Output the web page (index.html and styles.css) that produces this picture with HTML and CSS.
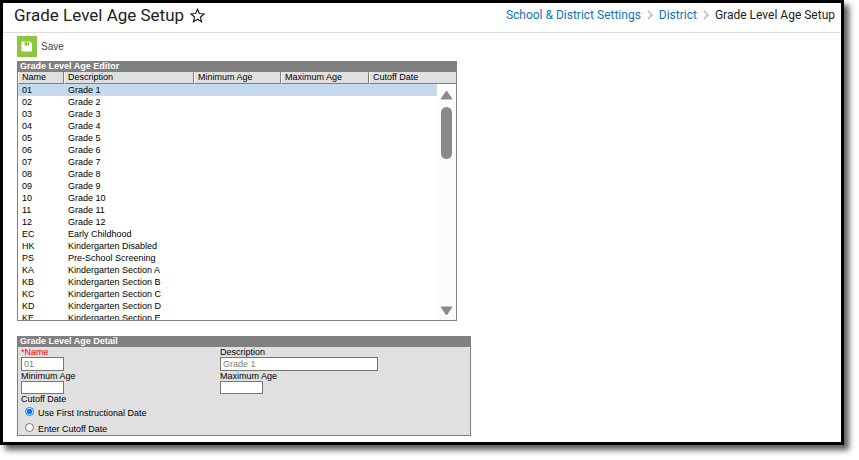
FILE: index.html
```html
<!DOCTYPE html>
<html lang="en">
<head>
<meta charset="utf-8">
<title>Grade Level Age Setup</title>
<link rel="stylesheet" href="styles.css">
</head>
<body>
<div class="frame">
  <header class="top">
    <h1>Grade Level Age Setup</h1>
    <button class="star" type="button" aria-label="Favorite">
      <svg width="15" height="15" viewBox="0 0 15 15"><path d="M7.500 1.300 9.300 5.500 14 6 10.500 9 11.500 13.700 7.500 11.200 3.500 13.700 4.500 9 1 6 5.700 5.500Z" fill="none" stroke="#222" stroke-width="1.200"/></svg>
    </button>
    <nav class="crumbs" aria-label="Breadcrumb">
      <a href="#">School &amp; District Settings</a>
      <svg width="6" height="10" viewBox="0 0 6 10"><path d="M1 1 5 5 1 9" fill="none" stroke="#b5b5b5" stroke-width="1.400"/></svg>
      <a href="#">District</a>
      <svg width="6" height="10" viewBox="0 0 6 10"><path d="M1 1 5 5 1 9" fill="none" stroke="#b5b5b5" stroke-width="1.400"/></svg>
      <span>Grade Level Age Setup</span>
    </nav>
  </header>
  <main>
    <button class="save" type="button">
      <svg width="20" height="21" viewBox="0 0 20 21"><rect width="20" height="21" fill="#8dc63f"/><path d="M5.500 5.500H13L15 7.500V14.500Q15 15.500 14 15.500H5.500Q4.500 15.500 4.500 14.500V6.500Q4.500 5.500 5.500 5.500Z" fill="#fff"/><path d="M7.500 6V9.500H12V6H11V8H10V6Z" fill="#8dc63f"/></svg>
      <span>Save</span>
    </button>

    <section class="panel editor">
      <h2>Grade Level Age Editor</h2>
      <div class="list">
        <table>
          <colgroup><col class="c-name"><col class="c-desc"><col class="c-age"><col class="c-max"><col></colgroup>
          <thead><tr><th>Name</th><th>Description</th><th>Minimum Age</th><th>Maximum Age</th><th>Cutoff Date</th></tr></thead>
          <tbody>
            <tr class="selected"><td>01</td><td>Grade 1</td><td></td><td></td><td></td></tr>
            <tr><td>02</td><td>Grade 2</td><td></td><td></td><td></td></tr>
            <tr><td>03</td><td>Grade 3</td><td></td><td></td><td></td></tr>
            <tr><td>04</td><td>Grade 4</td><td></td><td></td><td></td></tr>
            <tr><td>05</td><td>Grade 5</td><td></td><td></td><td></td></tr>
            <tr><td>06</td><td>Grade 6</td><td></td><td></td><td></td></tr>
            <tr><td>07</td><td>Grade 7</td><td></td><td></td><td></td></tr>
            <tr><td>08</td><td>Grade 8</td><td></td><td></td><td></td></tr>
            <tr><td>09</td><td>Grade 9</td><td></td><td></td><td></td></tr>
            <tr><td>10</td><td>Grade 10</td><td></td><td></td><td></td></tr>
            <tr><td>11</td><td>Grade 11</td><td></td><td></td><td></td></tr>
            <tr><td>12</td><td>Grade 12</td><td></td><td></td><td></td></tr>
            <tr><td>EC</td><td>Early Childhood</td><td></td><td></td><td></td></tr>
            <tr><td>HK</td><td>Kindergarten Disabled</td><td></td><td></td><td></td></tr>
            <tr><td>PS</td><td>Pre-School Screening</td><td></td><td></td><td></td></tr>
            <tr><td>KA</td><td>Kindergarten Section A</td><td></td><td></td><td></td></tr>
            <tr><td>KB</td><td>Kindergarten Section B</td><td></td><td></td><td></td></tr>
            <tr><td>KC</td><td>Kindergarten Section C</td><td></td><td></td><td></td></tr>
            <tr><td>KD</td><td>Kindergarten Section D</td><td></td><td></td><td></td></tr>
            <tr><td>KE</td><td>Kindergarten Section E</td><td></td><td></td><td></td></tr>
          </tbody>
        </table>
        <div class="scrollbar" aria-hidden="true">
          <svg width="13" height="10" viewBox="0 0 13 10"><path d="M6.500 1 12 9H1Z" fill="#8a8a8a" stroke="#8a8a8a" stroke-linejoin="round"/></svg>
          <div class="thumb"></div>
          <svg class="down" width="13" height="10" viewBox="0 0 13 10"><path d="M6.500 9 12 1H1Z" fill="#8a8a8a" stroke="#8a8a8a" stroke-linejoin="round"/></svg>
        </div>
      </div>
    </section>

    <section class="panel detail">
      <h2>Grade Level Age Detail</h2>
      <form>
        <div class="fields">
          <div class="field"><label class="required" for="name">*Name</label><input id="name" type="text" value="01" disabled></div>
          <div class="field"><label for="desc">Description</label><input id="desc" class="wide" type="text" value="Grade 1" disabled></div>
          <div class="field"><label for="min">Minimum Age</label><input id="min" type="text"></div>
          <div class="field"><label for="max">Maximum Age</label><input id="max" type="text"></div>
        </div>
        <fieldset>
          <legend>Cutoff Date</legend>
          <label class="option"><input type="radio" name="cutoff" checked><span>Use First Instructional Date</span></label>
          <label class="option"><input type="radio" name="cutoff"><span>Enter Cutoff Date</span></label>
        </fieldset>
      </form>
    </section>
  </main>
</div>
</body>
</html>
```
FILE: styles.css
```css
* { box-sizing: border-box; }

body {
  margin: 0;
  padding: 0 15px 15px 0;
  background: #fff;
  color: #000;
  font: 9px/12px "Liberation Sans", Arial, sans-serif;
}

.frame {
  border: 3px solid #000;
  background: #fff;
  box-shadow: 5px 5px 6px rgba(0, 0, 0, .65);
}

.top {
  display: flex;
  align-items: center;
  height: 30px;
  padding: 0 6px 5px 11px;
  border-bottom: 1px solid #ddd;
  font-family: Roboto, sans-serif;
}

h1 {
  margin: 0;
  font-size: 17px;
  line-height: 24px;
  font-weight: 400;
  color: #222;
}

button {
  border: 0;
  padding: 0;
  background: none;
  font: inherit;
}

.star { margin-left: 6px; }
.star svg, .save svg { display: block; }

.crumbs {
  display: flex;
  align-items: center;
  gap: 6px;
  margin-left: auto;
  font-size: 12px;
  line-height: 16px;
  color: #222;
}

.crumbs a { color: #1672b8; text-decoration: none; }

main { padding: 3px 14px 6px; }

.save {
  display: flex;
  align-items: center;
  gap: 4px;
  margin-bottom: 4px;
  font-size: 10px;
  color: #444;
}

.panel { border: 1px solid #808080; border-top: 0; }

h2 {
  margin: 0;
  padding-left: 2px;
  background: #808080;
  color: #fff;
  font-size: 9px;
  line-height: 11px;
  font-weight: 700;
}

.editor { max-width: 440px; margin-bottom: 15px; }

.list { position: relative; height: 248px; overflow: hidden; }

table {
  width: 100%;
  table-layout: fixed;
  border-collapse: separate;
  border-spacing: 0;
}

.c-name { width: 46px; }
.c-desc { width: 130px; }
.c-age { width: 87px; }
.c-max { width: 88px; }

th, td {
  height: 12px;
  padding: 0 0 0 4px;
  font-weight: 400;
  text-align: left;
  white-space: nowrap;
}

th {
  padding-left: 3px;
  background: #e0e0e0;
  border-left: 1px solid #fff;
  border-right: 1px solid #808080;
  border-bottom: 1px solid #808080;
  line-height: 11px;
}

th:last-child { border-right: 0; }

.selected td { background: #c5daed; }

.scrollbar {
  position: absolute;
  top: 12px;
  right: 0;
  bottom: 0;
  width: 19px;
  padding: 6px 3px 4px;
  background: #fcfcfc;
  display: flex;
  flex-direction: column;
}

.thumb { width: 11px; height: 52px; margin: 7px 1px 0; border-radius: 6px; background: #8a8a8a; }
.down { margin-top: auto; }

.detail { max-width: 454px; background: #e0e0e0; }

form { padding: 0 3px; }

.fields { display: grid; grid-template-columns: 199px 1fr; }

.field { display: flex; flex-direction: column; align-items: flex-start; }

label, legend { line-height: 10px; }
.required { color: #f00; }

.field input {
  width: 43px;
  height: 13px;
  padding: 0 2px;
  border: 1px solid #767676;
  background: #fff;
  font: 9px/11px "Liberation Sans", Arial, sans-serif;
}

.field input:disabled { height: 14px; color: #808080; }
.field input.wide { width: 158px; }

fieldset { margin: 0; padding: 0; border: 0; }
legend { padding: 0; }

.option { display: flex; align-items: center; gap: 4px; height: 15px; padding-left: 4px; }
.option + .option { height: 16px; }
.option input { width: 9px; height: 9px; margin: 0; }
.option span { padding-top: 3px; }
```
